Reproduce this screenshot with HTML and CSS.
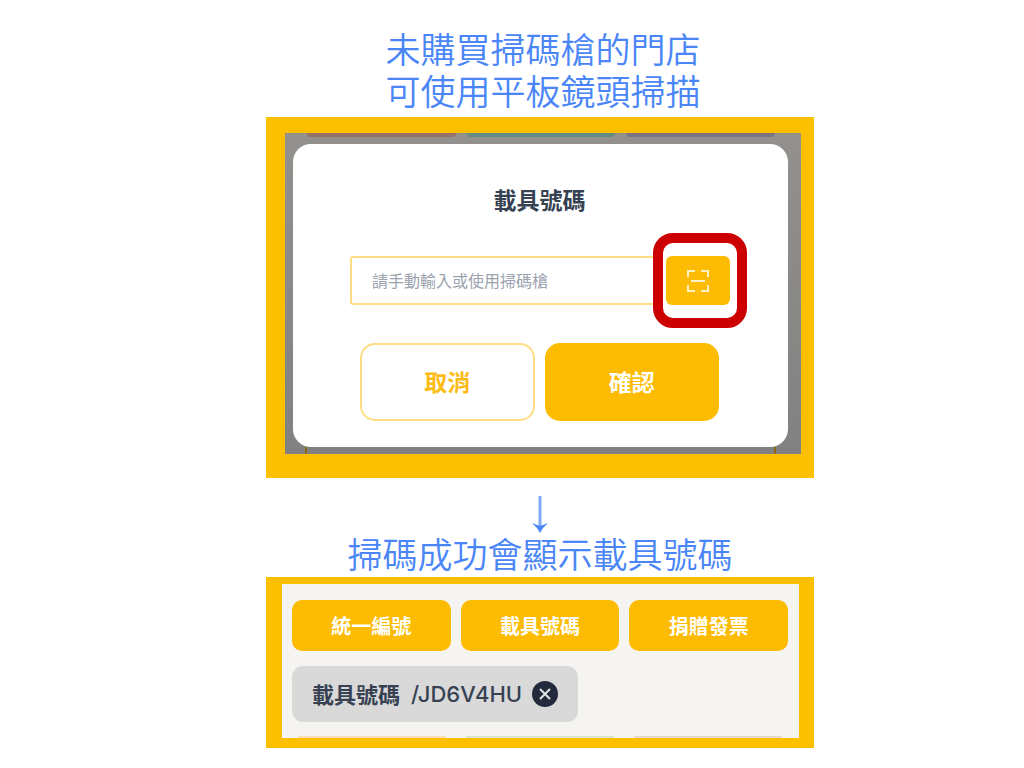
FILE: index.html
```html
<!DOCTYPE html>
<html lang="zh-Hant">
<head>
<meta charset="utf-8">
<meta name="viewport" content="width=device-width, initial-scale=1">
<title>載具號碼</title>
<link rel="stylesheet" href="styles.css">
</head>
<body>
<main class="guide">
  <h1 class="caption caption-intro">未購買掃碼槍的門店<br>可使用平板鏡頭掃描</h1>

  <section class="frame frame-dialog">
    <div class="backdrop">
      <div class="tabs tabs-top"><span class="tab tab-red"></span><span class="tab tab-teal"></span><span class="tab tab-purple"></span></div>
      <form class="dialog">
        <h2 class="dialog-title"><label for="carrier">載具號碼</label></h2>
        <div class="field">
          <input class="field-input" id="carrier" type="text" placeholder="請手動輸入或使用掃碼槍">
          <div class="scan">
            <button class="scan-button" type="button" aria-label="掃描">
              <svg class="scan-icon" viewBox="0 0 24 24" aria-hidden="true"><path d="M2 8V2h7M15 2h7v6M22 16v6h-7M9 22H2v-6M5 12h14"/></svg>
            </button>
          </div>
        </div>
        <div class="actions">
          <button class="action action-cancel" type="button">取消</button>
          <button class="action action-confirm" type="button">確認</button>
        </div>
      </form>
      <div class="posts"></div>
    </div>
  </section>

  <svg class="arrow" viewBox="0 0 16 38" aria-hidden="true"><path class="arrow-shaft" d="M8 0v32"/><path class="arrow-head" d="M0 27q5 2 8 3q3-1 8-3q-5 4-8 10q-3-6-8-10z"/></svg>
  <h2 class="caption">掃碼成功會顯示載具號碼</h2>

  <section class="frame frame-result">
    <div class="options">
      <button class="option" type="button">統一編號</button>
      <button class="option" type="button">載具號碼</button>
      <button class="option" type="button">捐贈發票</button>
    </div>
    <div class="chip">
      <span class="chip-label">載具號碼</span>
      <span class="chip-code">/JD6V4HU</span>
      <button class="chip-remove" type="button" aria-label="移除">
        <svg class="chip-icon" viewBox="0 0 26 26" aria-hidden="true"><circle cx="13" cy="13" r="13"/><path d="M8 8l10 10M18 8L8 18"/></svg>
      </button>
    </div>
    <div class="tabs tabs-bottom"><span class="tab tab-red"></span><span class="tab tab-teal"></span><span class="tab tab-purple"></span></div>
  </section>
</main>
</body>
</html>
```
FILE: styles.css
```css
* {
  box-sizing: border-box;
}

body {
  margin: 0;
  background: #fff;
  color: #364152;
  font-family: "Noto Sans CJK TC", sans-serif;
}

button,
input {
  margin: 0;
  padding: 0;
  border: 0;
  font: inherit;
}

button {
  cursor: pointer;
}

.guide {
  display: flex;
  flex-direction: column;
  align-items: center;
  padding: 27px 0 20px 56px;
}

.caption {
  margin: 0;
  color: #4a86f7;
  font-size: 35px;
  font-weight: 350;
  line-height: 42px;
  text-align: center;
}

.caption-intro {
  padding-left: 6px;
}

.frame {
  width: 100%;
  max-width: 548px;
  border: solid #fdc000;
}

.frame-dialog {
  margin-top: 6px;
  border-width: 16px 13px 24px 19px;
}

.backdrop {
  padding: 0 13px 0 8px;
  background: linear-gradient(#93918e, #818181);
}

.tabs {
  display: grid;
  grid-template-columns: repeat(3, 1fr);
  gap: 11px;
}

.tabs-top {
  height: 11px;
  padding: 0 13px 0 14px;
}

.tab {
  height: 4px;
  border-radius: 0 0 6px 6px;
}

.tabs-top .tab-red { background: #957265; }
.tabs-top .tab-teal { background: #668b87; }
.tabs-top .tab-purple { background: #7c7483; }

.dialog {
  padding: 38px 59px 26px 57px;
  border-radius: 18px;
  background: #fff;
}

.dialog-title {
  margin: 0;
  font-size: 23px;
  font-weight: 700;
  line-height: 34px;
  text-align: center;
}

.field {
  position: relative;
  display: flex;
  margin-top: 40px;
}

.field-input {
  flex: 1;
  min-width: 0;
  height: 49px;
  padding: 0 100px 2px 20px;
  border: 2px solid #ffdd83;
  border-radius: 3px;
  background: #fff;
  color: #364152;
  font-size: 16px;
}

.field-input::placeholder {
  color: #9ca3af;
  opacity: 1;
}

.scan {
  position: absolute;
  top: -23px;
  right: -18px;
  padding: 13px 7px 13px 3px;
  border: 10px solid #c00;
  border-radius: 20px;
  background: #fff;
}

.scan-button {
  display: grid;
  place-items: center;
  width: 64px;
  height: 49px;
  border-radius: 6px;
  background: #fdbb02;
}

.scan-icon {
  width: 24px;
  height: 24px;
  fill: none;
  stroke: #fff0c4;
  stroke-width: 2;
}

.actions {
  display: grid;
  grid-template-columns: 1fr 1fr;
  gap: 10px;
  margin-top: 38px;
  padding: 0 10px;
}

.action {
  height: 78px;
  padding-bottom: 2px;
  border-radius: 15px;
  font-size: 23px;
  font-weight: 700;
}

.action-cancel {
  border: 2px solid #ffdd83;
  background: #fff;
  color: #fdbb16;
}

.action-confirm {
  background: #fdbb02;
  color: #fff;
}

.posts {
  height: 7px;
  margin: 0 12px;
  border: solid #8b6a10;
  border-width: 0 2px;
}

.arrow {
  width: 16px;
  height: 38px;
  margin-top: 18px;
}

.arrow-shaft {
  fill: none;
  stroke: #82abf9;
  stroke-width: 3;
}

.arrow-head {
  fill: #4a86f7;
}

.arrow + .caption {
  margin-top: -2px;
}

.frame-result {
  margin-top: 3px;
  padding: 16px 11px 0 10px;
  border-width: 7px 15px 10px 16px;
  background: #f6f4f0;
}

.options {
  display: grid;
  grid-template-columns: repeat(3, 1fr);
  gap: 10px;
}

.option {
  height: 51px;
  border-radius: 10px;
  background: #fdbb02;
  color: #fff;
  font-size: 20px;
  font-weight: 700;
}

.chip {
  display: inline-flex;
  align-items: center;
  height: 56px;
  margin: 15px 0 14px;
  padding: 0 20px;
  border-radius: 11px;
  background: #d9d9d9;
  font-size: 22px;
  font-weight: 500;
  vertical-align: top;
}

.chip-label {
  padding-bottom: 2px;
  font-weight: 700;
}

.chip-code {
  margin: 0 10px 0 11px;
  font-family: Inter, "Liberation Sans", sans-serif;
}

.chip-remove {
  width: 26px;
  height: 26px;
  border-radius: 50%;
  background: none;
}

.chip-icon {
  display: block;
  width: 26px;
  height: 26px;
  fill: #222a3c;
  stroke: #e4e4e6;
  stroke-width: 2;
}

.chip-icon circle {
  stroke: none;
}

.tabs-bottom {
  gap: 20px;
  padding: 0 6px;
}

.tabs-bottom .tab {
  height: 2px;
  border-radius: 0;
}

.tabs-bottom .tab-red { background: #f9dcb8; }
.tabs-bottom .tab-teal { background: #d5e5d0; }
.tabs-bottom .tab-purple { background: #e2d8d0; }
```
